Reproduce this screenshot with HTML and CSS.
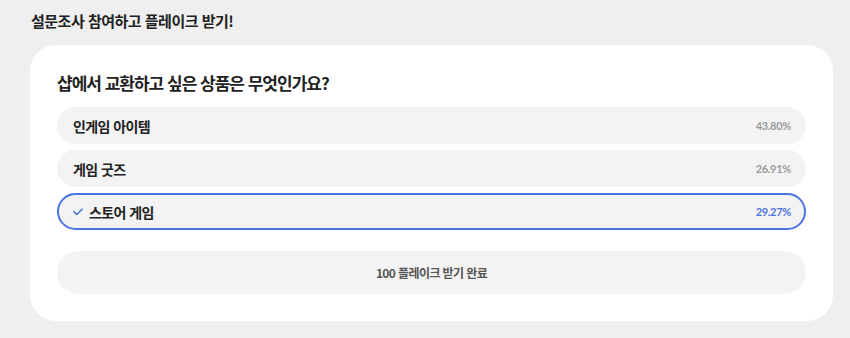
FILE: index.html
```html
<!DOCTYPE html>
<html lang="ko">
<head>
    <meta charset="UTF-8">
    <meta name="viewport" content="width=device-width, initial-scale=1.0">
    <title>설문조사</title>
    <link rel="stylesheet" href="styles.css">
</head>
<body>
    <div id="survey">
        <h2 class="survey__title">설문조사 참여하고 플레이크 받기!</h2>

        <div class="card">
            <h3 class="card__question">샵에서 교환하고 싶은 상품은 무엇인가요?</h3>

            <div class="options">
                <div class="option">
                    <span class="option__label">인게임 아이템</span>
                    <span class="option__pct">43.80%</span>
                </div>
                <div class="option">
                    <span class="option__label">게임 굿즈</span>
                    <span class="option__pct">26.91%</span>
                </div>
                <div class="option selected">
                    <span class="option__label">
                        <svg class="check" width="10" height="8" viewBox="0 0 10 8">
                            <path d="M1 3.8 L3.8 6.5 L9 1.2" fill="none" stroke="#4a74e0" stroke-width="1.6" stroke-linecap="round" stroke-linejoin="round"/>
                        </svg>
                        스토어 게임
                    </span>
                    <span class="option__pct">29.27%</span>
                </div>
            </div>

            <button class="done-button">100 플레이크 받기 완료</button>
        </div>
    </div>
</body>
</html>
```

FILE: styles.css
```css
*{
    box-sizing: border-box;
}

body{
    margin: 0;
    background-color: #efefef;
    font-family: "Noto Sans CJK KR", "Noto Sans", sans-serif;
    color: #222;
}

#survey{
    padding: 8px 17px 17px 30px;
}

.survey__title{
    margin: 0 0 12px 1px;
    font-size: 15px;
    line-height: 25px;
    font-weight: 700;
    letter-spacing: -0.5px;
}

.card{
    background-color: #fff;
    border-radius: 26px;
    padding: 25px 27px 27px 27px;
}

.card__question{
    margin: 0 0 11px 0;
    font-size: 17px;
    line-height: 26px;
    font-weight: 700;
    letter-spacing: -1px;
}

.options{
    display: flex;
    flex-direction: column;
    gap: 6px;
}

.option{
    display: flex;
    align-items: center;
    justify-content: space-between;
    height: 37px;
    padding: 0 14px 0 15px;
    background-color: #f3f3f3;
    border: 1px solid #f3f3f3;
    border-radius: 20px;
}

.option__label{
    display: flex;
    align-items: center;
    font-size: 14px;
    font-weight: 700;
    letter-spacing: -0.6px;
}

.option__pct{
    font-family: Lato, "Liberation Sans", sans-serif;
    font-size: 11px;
    font-weight: 700;
    color: #9a9a9a;
    letter-spacing: -0.3px;
}

.option.selected{
    border: 2px solid #4a74e0;
}

.option.selected .option__label{
    margin-left: -1px;
}

.option.selected .option__pct{
    color: #4a74e0;
    margin-right: -1px;
}

.check{
    margin-right: 6px;
}

.done-button{
    display: block;
    width: 100%;
    height: 43px;
    margin-top: 21px;
    background-color: #f3f3f3;
    border: none;
    border-radius: 22px;
    font-family: "Noto Sans CJK KR", "Noto Sans", sans-serif;
    font-size: 12px;
    font-weight: 700;
    color: #555;
    letter-spacing: -0.6px;
}
```
